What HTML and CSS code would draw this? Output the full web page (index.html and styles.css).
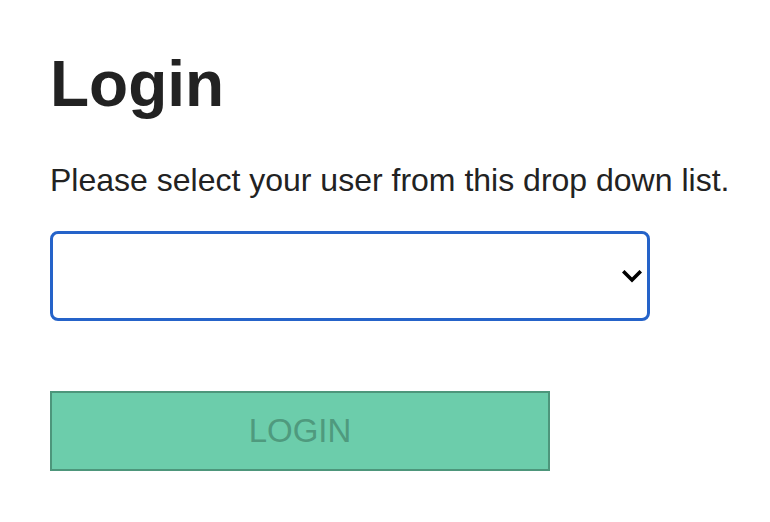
FILE: index.html
```html
<!DOCTYPE html>
<html>
<head>
<meta charset="utf-8">
<link rel="stylesheet" href="styles.css">
</head>
<body>
<div class="page">
  <h1 class="title">Login</h1>
  <p class="intro">Please select your user from this drop down list.</p>
  <div class="select-wrap">
    <select class="user-select"><option></option></select>
    <svg class="chevron" width="20" height="13" viewBox="0 0 20 13"><path d="M2.5 2.5 L10 10 L17.5 2.5" fill="none" stroke="#000" stroke-width="3.6" stroke-linecap="square" stroke-linejoin="miter"/></svg>
  </div>
  <button class="login-btn" disabled>LOGIN</button>
</div>
</body>
</html>
```
FILE: styles.css
```css
html, body {
  margin: 0;
  padding: 0;
  background: #fff;
}
.page {
  padding: 47px 0 0 50px;
  font-family: "Liberation Sans", Arial, sans-serif;
  color: #222;
  display: flex;
  flex-direction: column;
  align-items: flex-start;
}
.title {
  margin: 0;
  font-size: 64px;
  line-height: 74px;
  font-weight: bold;
  color: #222;
}
.intro {
  margin: 41px 0 0 0;
  font-size: 32px;
  line-height: 37px;
  color: #222;
}
.select-wrap {
  position: relative;
  margin-top: 32px;
  width: 600px;
  height: 90px;
}
.user-select {
  appearance: none;
  -webkit-appearance: none;
  box-sizing: border-box;
  width: 600px;
  height: 90px;
  border: 3px solid #2563c9;
  border-radius: 8px;
  background: #fff;
  margin: 0;
  outline: none;
  font-size: 32px;
}
.chevron {
  position: absolute;
  right: 8px;
  top: 270px;
  top: 39px;
}
.login-btn {
  box-sizing: border-box;
  margin-top: 70px;
  width: 500px;
  height: 80px;
  border: 2px solid #4d967b;
  background: #6ccdab;
  color: #4f9a7e;
  font-family: "Liberation Sans", Arial, sans-serif;
  font-size: 33px;
  padding: 0;
}
```
